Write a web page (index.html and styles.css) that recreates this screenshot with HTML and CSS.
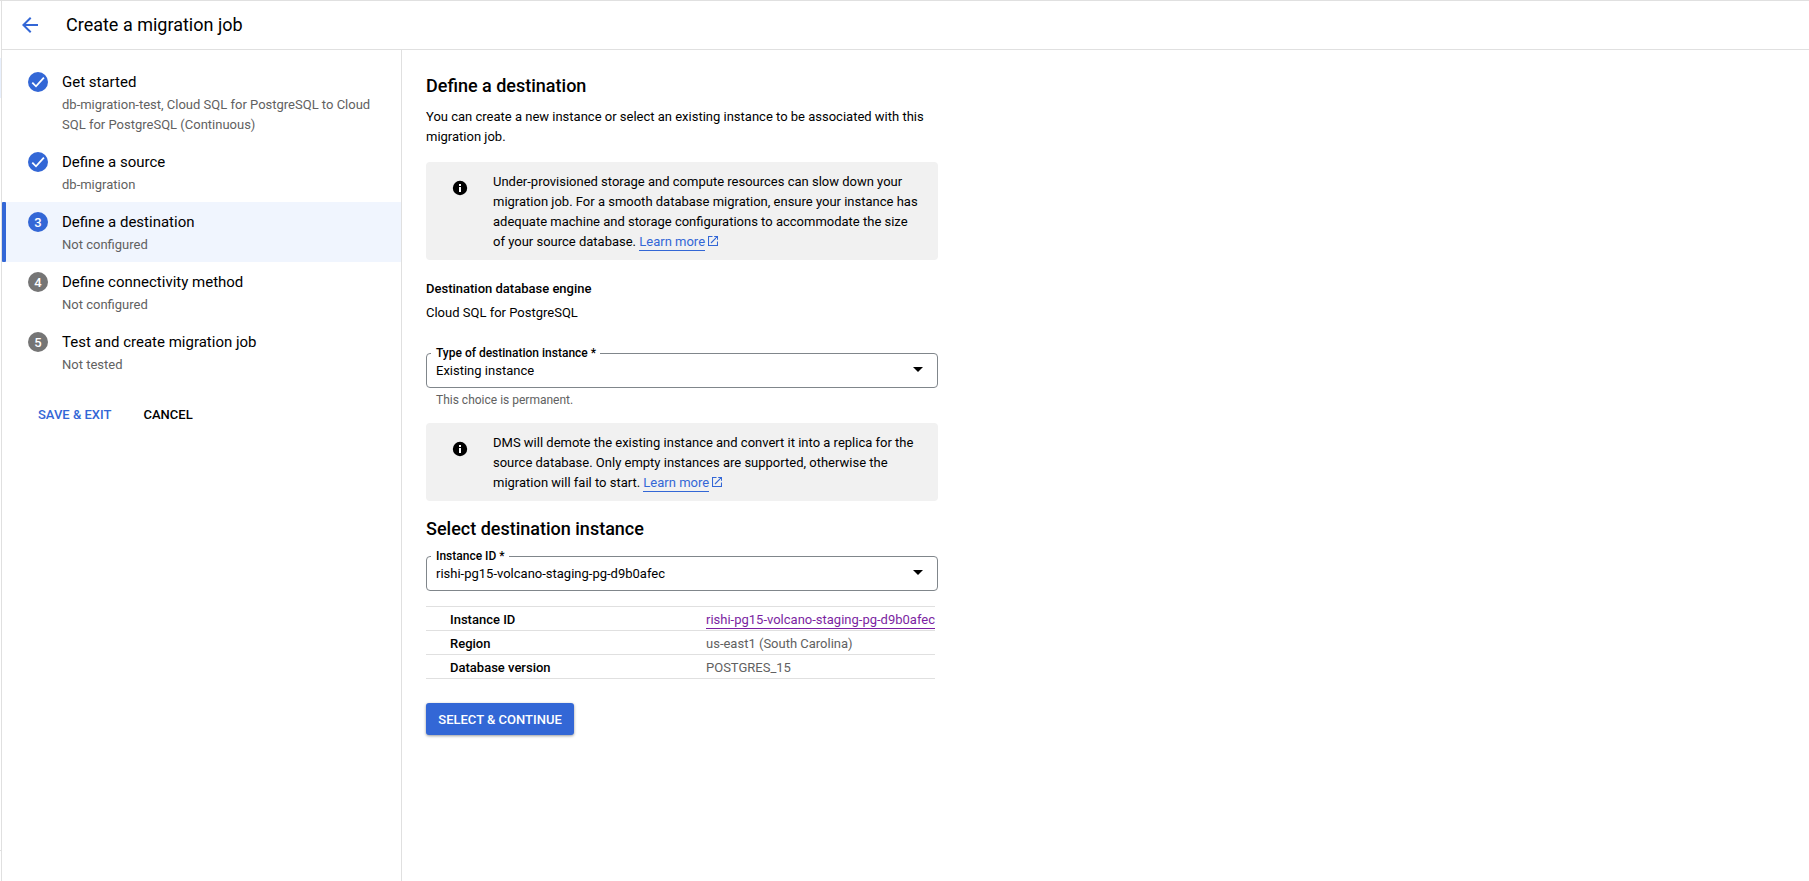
FILE: index.html
```html
<!DOCTYPE html>
<html lang="en">
<head>
<meta charset="utf-8">
<title>Create a migration job</title>
<link rel="stylesheet" href="styles.css">
</head>
<body>
<div class="rail"><div class="rail-active"></div><div class="rail-line"></div></div>
<div class="page">
  <header class="header">
    <svg class="back" viewBox="0 0 24 24"><path d="M20 11H7.83l5.59-5.59L12 4l-8 8 8 8 1.41-1.41L7.83 13H20v-2z"/></svg>
    <h1 class="title">Create a migration job</h1>
  </header>
  <div class="body">
    <nav class="sidebar">
      <div class="step">
        <span class="badge"><svg viewBox="0 0 20 20"><path d="M4.3 10.6l3.7 3.7 7.9-8.6"/></svg></span>
        <div><div class="step-name">Get started</div><div class="step-sub">db-migration-test, Cloud SQL for PostgreSQL to Cloud SQL for PostgreSQL (Continuous)</div></div>
      </div>
      <div class="step">
        <span class="badge"><svg viewBox="0 0 20 20"><path d="M4.3 10.6l3.7 3.7 7.9-8.6"/></svg></span>
        <div><div class="step-name">Define a source</div><div class="step-sub">db-migration</div></div>
      </div>
      <div class="step active">
        <span class="badge">3</span>
        <div><div class="step-name">Define a destination</div><div class="step-sub">Not configured</div></div>
      </div>
      <div class="step">
        <span class="badge pending">4</span>
        <div><div class="step-name">Define connectivity method</div><div class="step-sub">Not configured</div></div>
      </div>
      <div class="step">
        <span class="badge pending">5</span>
        <div><div class="step-name">Test and create migration job</div><div class="step-sub">Not tested</div></div>
      </div>
      <div class="actions"><a class="save">SAVE &amp; EXIT</a><a class="cancel">CANCEL</a></div>
    </nav>
    <main class="main">
      <h2 class="heading">Define a destination</h2>
      <p class="intro">You can create a new instance or select an existing instance to be associated with this migration job.</p>
      <div class="note">
        <svg class="info" viewBox="0 0 16 16"><circle cx="8" cy="8" r="7.2"/><path class="mark" d="M7 4h2v2H7zM7 7h2v5H7z"/></svg>
        <p class="note-text">Under-provisioned storage and compute resources can slow down your migration job. For a smooth database migration, ensure your instance has adequate machine and storage configurations to accommodate the size of your source database. <a class="link">Learn more</a><svg class="ext" viewBox="0 0 10 10"><path d="M4.5.5H.5v9h9v-4M6.2.5h3.3v3.3M9.3.7L3 7"/></svg></p>
      </div>
      <h3 class="label">Destination database engine</h3>
      <p class="engine">Cloud SQL for PostgreSQL</p>
      <fieldset class="field">
        <legend>Type of destination instance *</legend>
        <div class="select"><span>Existing instance</span><svg class="caret" viewBox="0 0 10 5"><path d="M0 0h10L5 5z"/></svg></div>
      </fieldset>
      <p class="hint">This choice is permanent.</p>
      <div class="note">
        <svg class="info" viewBox="0 0 16 16"><circle cx="8" cy="8" r="7.2"/><path class="mark" d="M7 4h2v2H7zM7 7h2v5H7z"/></svg>
        <p class="note-text">DMS will demote the existing instance and convert it into a replica for the source database. Only empty instances are supported, otherwise the migration will fail to start. <a class="link">Learn more</a><svg class="ext" viewBox="0 0 10 10"><path d="M4.5.5H.5v9h9v-4M6.2.5h3.3v3.3M9.3.7L3 7"/></svg></p>
      </div>
      <h2 class="heading second">Select destination instance</h2>
      <fieldset class="field instance">
        <legend>Instance ID *</legend>
        <div class="select"><span>rishi-pg15-volcano-staging-pg-d9b0afec</span><svg class="caret" viewBox="0 0 10 5"><path d="M0 0h10L5 5z"/></svg></div>
      </fieldset>
      <dl class="details">
        <div class="row"><dt>Instance ID</dt><dd><a class="link visited">rishi-pg15-volcano-staging-pg-d9b0afec</a></dd></div>
        <div class="row"><dt>Region</dt><dd>us-east1 (South Carolina)</dd></div>
        <div class="row"><dt>Database version</dt><dd>POSTGRES_15</dd></div>
      </dl>
      <button class="primary">SELECT &amp; CONTINUE</button>
    </main>
  </div>
</div>
</body>
</html>
```
FILE: styles.css
```css
* { box-sizing: border-box; margin: 0; padding: 0; }
body {
  display: flex;
  height: 881px;
  overflow: hidden;
  background: #fff;
  color: #000;
  font: 400 13px/20px Roboto, sans-serif;
  border-top: 1px solid #e0e0e0;
}
.rail { width: 1px; padding-top: 57px; }
.rail-active { height: 40px; background: #e8f0fe; }
.rail-line { height: 1px; margin-top: 752px; background: #e0e0e0; }
.page { flex: 1; display: flex; flex-direction: column; border-left: 1px solid #e0e0e0; }
.header { height: 49px; display: flex; align-items: center; border-bottom: 1px solid #e0e0e0; padding-left: 16px; }
.back { width: 24px; height: 24px; fill: #3367d6; }
.title { margin-left: 24px; font-size: 18px; font-weight: 400; line-height: 24px; }
.body { flex: 1; display: flex; }
.sidebar { width: 400px; padding-top: 12px; border-right: 1px solid #e0e0e0; }
.step { display: flex; gap: 14px; padding: 10px 24px 7px 26px; }
.step.active { background: #f0f5fe; position: relative; }
.step.active::before { content: ""; position: absolute; left: 0; top: 0; bottom: 0; width: 4px; background: #3367d6; border-radius: 1px; }
.badge { flex: none; width: 20px; height: 20px; border-radius: 50%; background: #3367d6; color: #fff; font-size: 13px; font-weight: 500; line-height: 21px; text-align: center; }
.badge.pending { background: #757575; }
.badge svg { display: block; fill: none; stroke: #fff; stroke-width: 1.8; }
.step-name { font-size: 15px; line-height: 20px; }
.step-sub { margin-top: 3px; color: #616161; }
.actions { display: flex; gap: 32px; padding: 23px 0 0 36px; font-weight: 500; }
.save { color: #3367d6; }
.main { width: 536px; padding: 24px 0 0 24px; }
.heading { font-size: 18px; font-weight: 500; line-height: 24px; }
.intro { margin-top: 9px; }
.note { display: flex; margin-top: 15px; padding: 10px 16px 8px 26px; background: #f1f1f1; border-radius: 4px; }
.info { flex: none; width: 16px; height: 16px; margin: 8px 25px 0 0; }
.info .mark { fill: #fff; }
.link { color: #3367d6; border-bottom: 1px solid #3367d6; padding-bottom: 1px; }
.ext { width: 10px; height: 10px; margin-left: 3px; fill: none; stroke: #3367d6; stroke-width: 1.1; }
.label { margin-top: 19px; font-size: 13px; font-weight: 500; }
.engine { margin-top: 4px; }
.field { height: 43px; margin-top: 22px; padding: 0 14px 0 9px; border: 1px solid #80868b; border-radius: 4px; }
.field legend { margin-left: -5px; padding: 0 4px 0 5px; font-size: 12px; font-weight: 500; line-height: 16px; }
.select { display: flex; align-items: center; justify-content: space-between; line-height: 20px; }
.caret { width: 10px; height: 5px; margin-bottom: 3px; }
.hint { margin-top: 2px; padding-left: 10px; font-size: 12px; color: #616161; }
.hint + .note { margin-top: 13px; }
.second { margin-top: 16px; }
.instance { margin-top: 7px; }
.details { width: 509px; margin-top: 15px; border-top: 1px solid #e0e0e0; }
.row { display: flex; height: 24px; padding-left: 24px; border-bottom: 1px solid #e0e0e0; line-height: 26px; }
.row dt { width: 256px; font-weight: 500; }
.row dd { color: #616161; }
.link.visited { color: #7b1fa2; border-color: #7b1fa2; }
.primary { display: block; width: 148px; height: 32px; margin-top: 24px; padding: 1px 0 0; border: 0; border-radius: 3px; background: #3367d6; color: #fff; font: 500 13px/31px Roboto, sans-serif; box-shadow: 0 1px 3px rgba(0,0,0,.4); }
```
